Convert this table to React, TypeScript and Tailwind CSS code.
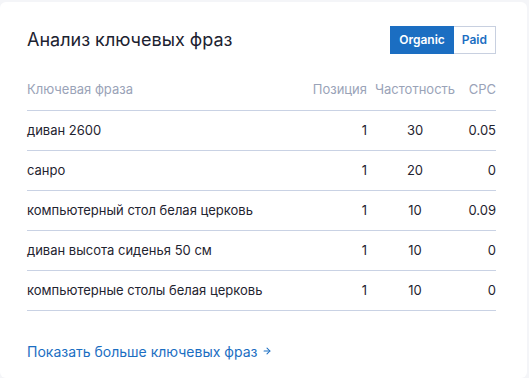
import { ArrowRight } from 'lucide-react';

const rows = [
  { phrase: 'диван 2600', pos: 1, freq: 30, cpc: '0.05' },
  { phrase: 'санро', pos: 1, freq: 20, cpc: '0' },
  { phrase: 'компьютерный стол белая церковь', pos: 1, freq: 10, cpc: '0.09' },
  { phrase: 'диван высота сиденья 50 см', pos: 1, freq: 10, cpc: '0' },
  { phrase: 'компьютерные столы белая церковь', pos: 1, freq: 10, cpc: '0' },
];

export default function App() {
  return (
    <div className="min-h-[378px] bg-[#f4f5f8] pt-[2px] pr-[2px] [font-family:Inter,'Noto_Sans',sans-serif]">
      <div className="bg-white rounded-md min-h-[376px] pl-[27px] pr-[31px] pt-[24px]">
        <div className="flex items-center justify-between h-[28px]">
          <h2 className="text-[18px] text-[#1c2230] leading-none">Анализ ключевых фраз</h2>
          <div className="flex h-[28px] text-[12px] font-semibold">
            <button className="px-[8px] bg-[#1b6ec2] text-white border border-[#1b6ec2]">Organic</button>
            <button className="px-[8px] bg-white text-[#1b6ec2] border border-l-0 border-[#c8d0e0]">Paid</button>
          </div>
        </div>

        <div className="mt-[16px] grid grid-cols-[1fr_58px_96px_33px] items-center h-[41px] border-b border-[#c9d2e4] text-[13px] text-[#9aa3b8]">
          <span>Ключевая фраза</span>
          <span className="text-right">Позиция</span>
          <span className="text-center">Частотность</span>
          <span className="text-right">CPC</span>
        </div>

        {rows.map((r) => (
          <div
            key={r.phrase}
            className="grid grid-cols-[1fr_58px_96px_33px] items-center h-[40px] border-b border-[#c9d2e4] text-[13px] text-[#1f2430]"
          >
            <span>{r.phrase}</span>
            <span className="text-right">{r.pos}</span>
            <span className="text-center">{r.freq}</span>
            <span className="text-right">{r.cpc}</span>
          </div>
        ))}

        <a href="#" className="mt-[30px] flex items-center gap-[5px] h-[20px] text-[14px] text-[#1b6ec2]">
          Показать больше ключевых фраз
          <ArrowRight className="w-[10px] h-[10px]" strokeWidth={2.5} />
        </a>
      </div>
    </div>
  );
}
